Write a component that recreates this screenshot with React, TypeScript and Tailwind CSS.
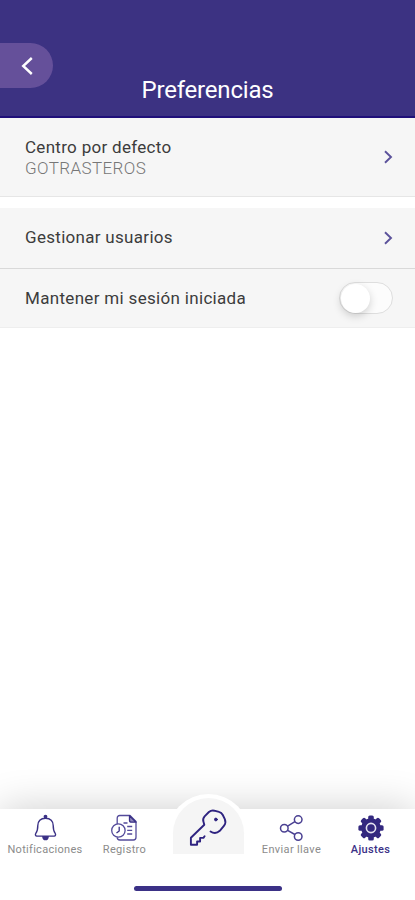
import React from 'react';

interface TabProps {
    label: string;
    labelClass: string;
    className: string;
    children: React.ReactNode;
}

const BackIcon = () => (
    <svg width="12" height="18" viewBox="0 0 12 18" fill="none" stroke="#fff" strokeWidth="2.4">
        <path d="M10.8 1 2.2 9l8.6 8" />
    </svg>
);

const ChevronIcon = () => (
    <svg width="9" height="14" viewBox="0 0 9 14" fill="none" stroke="#5b529b" strokeWidth="1.9">
        <path d="M1 1.2 7 7l-6 5.8" />
    </svg>
);

const BellIcon = () => (
    <svg width="26" height="28" viewBox="0 0 26 28" fill="none" stroke="#3b3186" strokeWidth="1.4" strokeLinejoin="round">
        <circle cx="13.5" cy="2.6" r="1.2" fill="#3b3186" />
        <path d="M13.5 4.2c-5 0-7.7 3.200-7.700 7.400 0 4.800-.8 6.300-2 7.800-.8 1.200-.2 2.700 1 2.700h17.400c1.200 0 1.800-1.500 1-2.700-1.200-1.500-2-3-2-7.800 0-4.200-2.700-7.400-7.700-7.400Z" />
        <path d="M10.800 22.600c.3 2.200 1.300 3 2.700 3s2.400-.8 2.700-3Z" fill="#3b3186" />
    </svg>
);

const RegistryIcon = () => (
    <svg width="28" height="28" viewBox="0 0 28 28" fill="none" stroke="#544b9b" strokeWidth="1.3" strokeLinejoin="round">
        <path d="M6.200 10V4.200c0-1.700 1-2.700 2.600-2.700H19l6 6v15.800c0 1.700-1 2.700-2.600 2.700H8.800c-1.600 0-2.600-1-2.600-2.700" />
        <path d="M18.500 1.700v4.500c0 1.300.7 2 2 2H25Z" fill="#8f88bd" stroke="#3b3186" />
        <circle cx="7.400" cy="16.500" r="6.700" />
        <path d="M8.200 12.800v4.200l-2.700 2" stroke="#3b3186" />
        <path d="M12.500 9h4M16.200 12.500h5M16.200 16.300h5M16.200 20h5" />
    </svg>
);

const KeyIcon = () => (
    <svg width="40" height="40" viewBox="0 0 40 40" fill="none" stroke="#2e2380" strokeWidth="1.9" strokeLinejoin="round" strokeLinecap="round">
        <path d="M21.500 24.500c3.500 2.300 6.800 1.600 9.300-.7l4.300-5.200c1.600-2 1.700-4 .7-6.500l-2-4.100c-.9-1.800-2-2.700-3.800-3.100l-4.700-1.200c-2.100-.4-3.800 0-5.400 1.300l-4.300 4.300c-1.500 1.700-1.900 3.200-1.200 5.300l.9 3.200L1.900 30.800v7h6.200v-3.300h3v-3.600h3.300l1.200-1.700" />
        <circle cx="26.900" cy="12.500" r="1.400" fill="#2e2380" strokeWidth="1" />
    </svg>
);

const ShareIcon = () => (
    <svg width="26" height="28" viewBox="0 0 26 28" fill="none" stroke="#4a4092" strokeWidth="1.5">
        <circle cx="19.200" cy="5.600" r="3.800" />
        <circle cx="5.300" cy="14.200" r="3.800" />
        <circle cx="19.200" cy="22.500" r="3.800" />
        <path d="m8.600 12.200 7.300-4.500M8.600 16.300l7.300 4.200" />
    </svg>
);

const GearIcon = () => (
    <svg width="28" height="28" viewBox="0 0 28 28" fill="#33287f">
        <circle cx="14" cy="14" r="9.800" />
        {[0, 45, 90, 135, 180, 225, 270, 315].map(angle => (
            <rect key={angle} x="11.200" y="1.400" width="5.600" height="6" rx="1.600" transform={`rotate(${angle} 14 14)`} />
        ))}
        <circle cx="14" cy="14" r="4.600" fill="none" stroke="#e5e3f0" strokeWidth="1.600" />
    </svg>
);

const Tab: React.FC<TabProps> = ({ label, labelClass, className, children }) => (
    <button className={`flex flex-col items-center pt-[5px] ${className}`}>
        {children}
        <span className={`pt-px text-[11px] leading-[14px] whitespace-nowrap ${labelClass}`}>{label}</span>
    </button>
);

export default function App() {
    return (
        <div className="flex h-[900px] w-full flex-col overflow-hidden bg-white font-['Roboto',sans-serif]">
            <header className="flex h-[118px] shrink-0 flex-col items-start border-b-2 border-[#20107a] bg-[#3c3282] pt-[43px]">
                <button className="flex h-[45px] w-[53px] shrink-0 items-center rounded-r-full bg-[#65509a] pl-[21px]">
                    <BackIcon />
                </button>
                <h1 className="-mt-[13px] w-full text-center text-[24px] leading-[30px] tracking-[-0.2px] text-white">Preferencias</h1>
            </header>

            <main className="flex-1 text-[#3c3c3c]">
                <section className="flex h-[79px] items-center justify-between border-b border-[#e6e6e6] bg-[#f6f6f6] pr-[22px] pl-[25px]">
                    <div className="pt-[2px] text-[17px] leading-[21px]">
                        <p className="tracking-[0.3px]">Centro por defecto</p>
                        <p className="font-light tracking-[0.4px] text-[#777]">GOTRASTEROS</p>
                    </div>
                    <ChevronIcon />
                </section>
                <section className="mt-[11px] bg-[#f6f6f6] text-[17px]">
                    <div className="flex h-[61px] items-center justify-between border-b border-[#d9d9d9] pr-[22px] pl-[25px]">
                        <span className="tracking-[0.3px]">Gestionar usuarios</span>
                        <ChevronIcon />
                    </div>
                    <div className="flex h-[59px] items-center justify-between border-b border-[#eee] pr-[22px] pl-[25px]">
                        <span className="pt-[2px] tracking-[0.32px]">Mantener mi sesión iniciada</span>
                        <button className="flex h-[32px] w-[54px] items-center rounded-full border border-[#dedede] bg-[#fcfcfc] pl-px">
                            <span className="size-[29px] rounded-full bg-white shadow-[0_3px_8px_rgba(0,0,0,0.18)]" />
                        </button>
                    </div>
                </section>
            </main>

            <nav className="relative h-[91px] shrink-0 bg-white text-[#8b8b8b] shadow-[0_0_42px_rgba(0,0,0,0.2)]">
                <div className="absolute -top-[15px] left-[167px] h-[60px] w-[83px] rounded-t-full bg-white px-[6px] pt-[4px]">
                    <button className="flex h-[56px] w-[71px] justify-center rounded-t-[36px] bg-[#f5f5f5] pt-[9px]">
                        <KeyIcon />
                    </button>
                </div>
                <div className="flex h-[56px]">
                    <Tab label="Notificaciones" labelClass="tracking-[0.3px]" className="w-[90px]"><BellIcon /></Tab>
                    <Tab label="Registro" labelClass="tracking-[0.35px]" className="w-[69px]"><RegistryIcon /></Tab>
                    <div className="w-[98px]" />
                    <Tab label="Enviar llave" labelClass="tracking-[0.35px]" className="w-[69px]"><ShareIcon /></Tab>
                    <Tab label="Ajustes" labelClass="font-medium tracking-[0.35px] text-[#3b3186]" className="w-[89px]"><GearIcon /></Tab>
                </div>
                <div className="mx-auto mt-[21px] h-[5px] w-[148px] rounded-full bg-[#3b3186]" />
            </nav>
        </div>
    );
}
